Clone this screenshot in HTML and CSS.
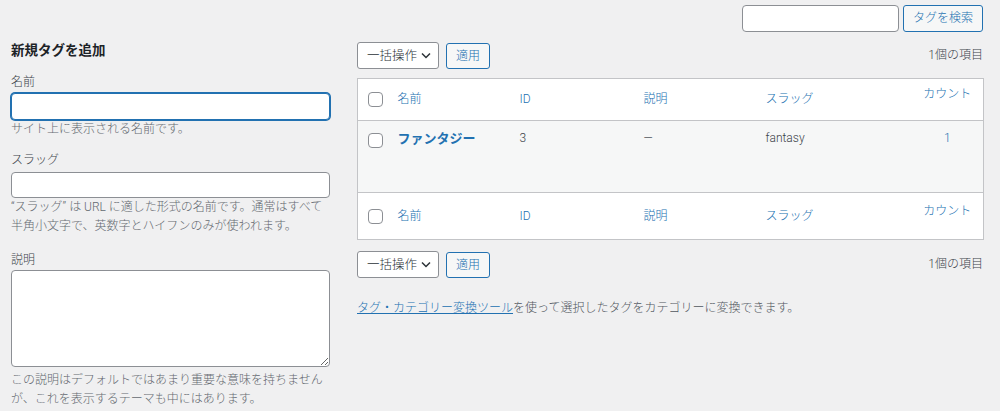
FILE: index.html
```html
<!DOCTYPE html>
<html lang="ja">
<head>
<meta charset="utf-8">
<title>タグ</title>
<link rel="stylesheet" href="styles.css">
</head>
<body>
<div class="page">
  <div class="search-row">
    <input class="search-input" type="search" aria-label="タグを検索">
    <button class="button search-button" type="button">タグを検索</button>
  </div>
  <div class="columns">
    <div class="col-left">
      <h2 class="form-title">新規タグを追加</h2>
      <div class="field field-name">
        <label class="field-label">名前</label>
        <input class="text-input is-focus" type="text">
        <p class="description">サイト上に表示される名前です。</p>
      </div>
      <div class="field field-slug">
        <label class="field-label">スラッグ</label>
        <input class="text-input slug-input" type="text">
        <p class="description">“スラッグ” は URL に適した形式の名前です。通常はすべて半角小文字で、英数字とハイフンのみが使われます。</p>
      </div>
      <div class="field field-desc">
        <label class="field-label">説明</label>
        <textarea class="text-area"></textarea>
        <p class="description desc-after-area">この説明はデフォルトではあまり重要な意味を持ちませんが、これを表示するテーマも中にはあります。</p>
      </div>
    </div>
    <div class="col-right">
      <div class="tablenav tablenav-top">
        <div class="select">一括操作<svg class="chev" width="10" height="7" viewBox="0 0 10 7"><path d="M1 1.5l4 4 4-4" fill="none" stroke="#2c3338" stroke-width="1.5"/></svg></div>
        <button class="button" type="button">適用</button>
        <div class="items">1個の項目</div>
      </div>
      <table class="list-table">
        <colgroup>
          <col class="w-cb"><col class="w-name"><col class="w-id"><col class="w-desc"><col class="w-slug"><col class="w-count">
        </colgroup>
        <thead>
          <tr>
            <td class="cb"><span class="checkbox"></span></td>
            <th class="col-link">名前</th>
            <th class="col-link">ID</th>
            <th class="col-link">説明</th>
            <th class="col-link">スラッグ</th>
            <th class="col-link num">カウント</th>
          </tr>
        </thead>
        <tbody>
          <tr class="alt">
            <td class="cb"><span class="checkbox"></span></td>
            <td><a class="row-title">ファンタジー</a></td>
            <td>3</td>
            <td>—</td>
            <td>fantasy</td>
            <td class="num"><a class="count-link">1</a></td>
          </tr>
        </tbody>
        <tfoot>
          <tr>
            <td class="cb"><span class="checkbox"></span></td>
            <th class="col-link">名前</th>
            <th class="col-link">ID</th>
            <th class="col-link">説明</th>
            <th class="col-link">スラッグ</th>
            <th class="col-link num">カウント</th>
          </tr>
        </tfoot>
      </table>
      <div class="tablenav tablenav-bottom">
        <div class="select">一括操作<svg class="chev" width="10" height="7" viewBox="0 0 10 7"><path d="M1 1.5l4 4 4-4" fill="none" stroke="#2c3338" stroke-width="1.5"/></svg></div>
        <button class="button" type="button">適用</button>
        <div class="items">1個の項目</div>
      </div>
      <p class="note"><a class="note-link">タグ・カテゴリー変換ツール</a>を使って選択したタグをカテゴリーに変換できます。</p>
    </div>
  </div>
</div>
</body>
</html>
```
FILE: styles.css
```css
* { box-sizing: border-box; }
html, body { margin: 0; padding: 0; }
body {
  background: #f0f0f1;
  font-family: Roboto, "Noto Sans CJK JP", sans-serif;
  font-size: 12px;
  line-height: 19px;
  font-weight: 300;
  color: #3c434a;
}
.page { padding: 5px 17px 0 11px; }

.search-row {
  display: flex;
  justify-content: flex-end;
  gap: 4px;
  height: 27px;
}
.search-input {
  width: 157px;
  height: 27px;
  border: 1px solid #8c8f94;
  border-radius: 4px;
  background: #fff;
  margin: 0;
  padding: 0 8px;
}
.button {
  height: 27px;
  margin: 0;
  padding: 0 10px;
  font-family: inherit;
  font-size: 12px;
  font-weight: 300;
  line-height: 25px;
  color: #2271b1;
  background: #f6f7f7;
  border: 1px solid #2271b1;
  border-radius: 3px;
}
.search-button { width: 80px; padding: 0; text-align: center; }

.columns {
  display: grid;
  grid-template-columns: 319px 626px;
  column-gap: 27px;
  margin-top: 9px;
}

/* left */
.form-title {
  margin: 0;
  font-size: 13.5px;
  line-height: 18px;
  font-weight: 700;
  color: #1d2327;
}
.field-label {
  display: block;
  line-height: 18px;
  color: #3c434a;
}
.field-name { margin-top: 14px; }
.field-slug { margin-top: 12px; }
.field-desc { margin-top: 15px; }
.text-input {
  display: block;
  width: 319px;
  height: 27px;
  margin: 2px 0 0;
  padding: 0 8px;
  border: 1px solid #8c8f94;
  border-radius: 4px;
  background: #fff;
}
.slug-input { height: 26px; margin-top: 3px; }
.is-focus {
  border-color: #2271b1;
  box-shadow: 0 0 0 1px #2271b1;
  outline: none;
}
.text-area {
  display: block;
  width: 319px;
  height: 97px;
  margin: 1px 0 0;
  border: 1px solid #8c8f94;
  border-radius: 4px;
  background: #fff;
  resize: vertical;
}
.description {
  margin: 0;
  color: #646970;
  line-height: 19px;
}
.desc-after-area { margin-top: 4px; }

/* right */
.tablenav {
  display: flex;
  align-items: center;
  gap: 7px;
  height: 27px;
}
.tablenav-top { margin-top: 1px; }
.tablenav-bottom { margin-top: 11px; }
.select {
  display: flex;
  align-items: center;
  justify-content: space-between;
  width: 82px;
  height: 27px;
  padding: 0 7px 0 9px;
  background: #fff;
  border: 1px solid #8c8f94;
  border-radius: 3px;
  color: #2c3338;
  font-size: 12.5px;
}
.chev { display: block; }
.tablenav .button { height: 26px; padding: 0 9px; }
.items { margin-left: auto; color: #3c434a; }

.list-table {
  width: 626px;
  margin-top: 9px;
  border-collapse: collapse;
  table-layout: fixed;
  background: #fff;
  border: 1px solid #c3c4c7;
}
.w-cb { width: 30px; }
.w-name { width: 122px; }
.w-id { width: 124px; }
.w-desc { width: 122px; }
.w-slug { width: 150px; }
.w-count { width: 78px; }

.list-table th, .list-table td {
  padding: 0 10px;
  text-align: left;
  font-weight: 300;
  color: #3c434a;
}
.list-table thead tr { height: 42px; border-bottom: 1px solid #c3c4c7; }
.list-table tfoot tr { height: 47px; border-top: 1px solid #c3c4c7; }
.list-table thead th, .list-table tfoot th { vertical-align: middle; }
.list-table .col-link { color: #2271b1; }
.list-table th.num {
  text-align: center;
  padding: 0 0 10px 6px;
}
.list-table td.cb { padding: 0 0 0 10px; vertical-align: middle; }
.checkbox {
  display: block;
  width: 15px;
  height: 15px;
  background: #fff;
  border: 1px solid #8c8f94;
  border-radius: 4px;
}
.alt { background: #f6f7f7; height: 72px; }
.alt td { vertical-align: top; padding-top: 8px; }
.alt td.cb { vertical-align: top; padding-top: 12px; }
.alt td.num { text-align: center; padding-left: 6px; padding-right: 0; }
.row-title {
  color: #2271b1;
  font-weight: 700;
  font-size: 13px;
}
.count-link { color: #2271b1; }

.note {
  margin: 21px 0 0;
  color: #50575e;
}
.note-link {
  color: #2271b1;
  text-decoration: underline;
}
```
